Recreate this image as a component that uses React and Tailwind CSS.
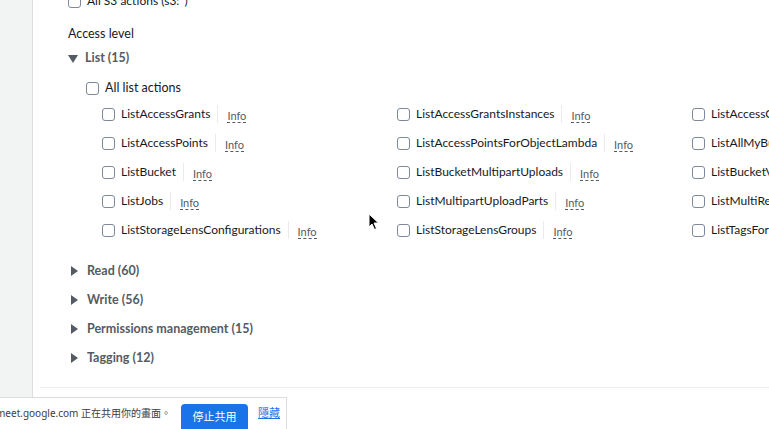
import React from "react";

const cols = [
  ["ListAccessGrants", "ListAccessPoints", "ListBucket", "ListJobs", "ListStorageLensConfigurations"],
  ["ListAccessGrantsInstances", "ListAccessPointsForObjectLambda", "ListBucketMultipartUploads", "ListMultipartUploadParts", "ListStorageLensGroups"],
  ["ListAccessGrantsLocations", "ListAllMyBuckets", "ListBucketVersions", "ListMultiRegionAccessPoints", "ListTagsForResource"],
];

const collapsed = ["Read (60)", "Write (56)", "Permissions management (15)", "Tagging (12)"];

function Box(){
  return <span className="inline-block w-[13px] h-[13px] border border-[#7d8998] rounded-[3px] bg-white shrink-0"></span>;
}

function Action({name}){
  return (
    <div className="flex items-center h-[29px]">
      <Box />
      <span className="ml-[6px] text-[12px] text-[#16191f] whitespace-nowrap">{name}</span>
      <span className="ml-[7px] w-px h-[18px] bg-[#e9ebed]"></span>
      <span className="ml-[9px] text-[11px] text-[#545b64] border-b border-dashed border-[#545b64] leading-[13px] mt-[3px]">Info</span>
    </div>
  );
}

function Caret({open}){
  return open
    ? <svg width="10" height="8" viewBox="0 0 10 8"><path d="M0 0 L10 0 L5 8 Z" fill="#545b64" /></svg>
    : <svg width="7" height="10" viewBox="0 0 7 10"><path d="M0 0 L7 5 L0 10 Z" fill="#545b64" /></svg>;
}

export default function App(){
  return (
    <div className="relative w-[769px] h-[429px] overflow-hidden bg-white flex" style={{fontFamily: 'Lato, "Open Sans", sans-serif'}}>
      <div className="w-[33px] shrink-0 bg-[#f2f3f3] border-r border-[#dcdfe0]"></div>

      <div className="flex-1 flex flex-col pl-[35px]">
        <div className="flex items-center -mt-[9px] h-[20px]">
          <Box />
          <span className="ml-[6px] text-[12px] text-[#16191f]">All S3 actions (s3:*)</span>
        </div>

        <div className="mt-[14px] text-[12.5px] text-[#16191f]">Access level</div>

        <div className="mt-[5px] flex items-center h-[20px]">
          <Caret open />
          <span className="ml-[7px] text-[12.5px] font-bold text-[#545b64]">List (15)</span>
        </div>

        <div className="mt-[10px] ml-[18px] flex items-center h-[20px]">
          <Box />
          <span className="ml-[6px] text-[12.5px] text-[#16191f]">All list actions</span>
        </div>

        <div className="mt-[1px] ml-[34px] flex">
          {cols.map((c, i) => (
            <div key={i} className="w-[295px] shrink-0 flex flex-col">
              {c.map(n => <Action key={n} name={n} />)}
            </div>
          ))}
        </div>

        <div className="mt-[12px] flex flex-col">
          {collapsed.map(s => (
            <div key={s} className="flex items-center h-[29px] pl-[3px]">
              <Caret />
              <span className="ml-[9px] text-[12.5px] font-bold text-[#545b64]">{s}</span>
            </div>
          ))}
        </div>

        <div className="mt-[14px] ml-[-28px] border-t border-[#eaeded]"></div>
      </div>

      <div className="absolute left-0 top-[397px] w-[287px] h-[32px] bg-white border-t border-r border-[#dadce0] flex items-center" style={{fontFamily: '"Noto Sans", "Noto Sans CJK TC", sans-serif'}}>
        <span className="ml-[-4px] text-[10px] text-[#3c4043] whitespace-nowrap">meet.google.com 正在共用你的畫面。</span>
        <span className="ml-[10px] mt-[8px] w-[67px] h-[28px] bg-[#1a73e8] rounded-[4px] text-white text-[11px] flex items-center justify-center shrink-0">停止共用</span>
        <span className="ml-[10px] text-[11px] text-[#1a73e8] underline whitespace-nowrap">隱藏</span>
      </div>

      <svg className="absolute left-[368px] top-[213px]" width="12" height="18" viewBox="0 0 12 18">
        <path d="M1 1 L1 14 L4 11 L6.5 16.5 L8.5 15.5 L6 10 L10.5 10 Z" fill="#000" stroke="#fff" strokeWidth="1" />
      </svg>
    </div>
  );
}
